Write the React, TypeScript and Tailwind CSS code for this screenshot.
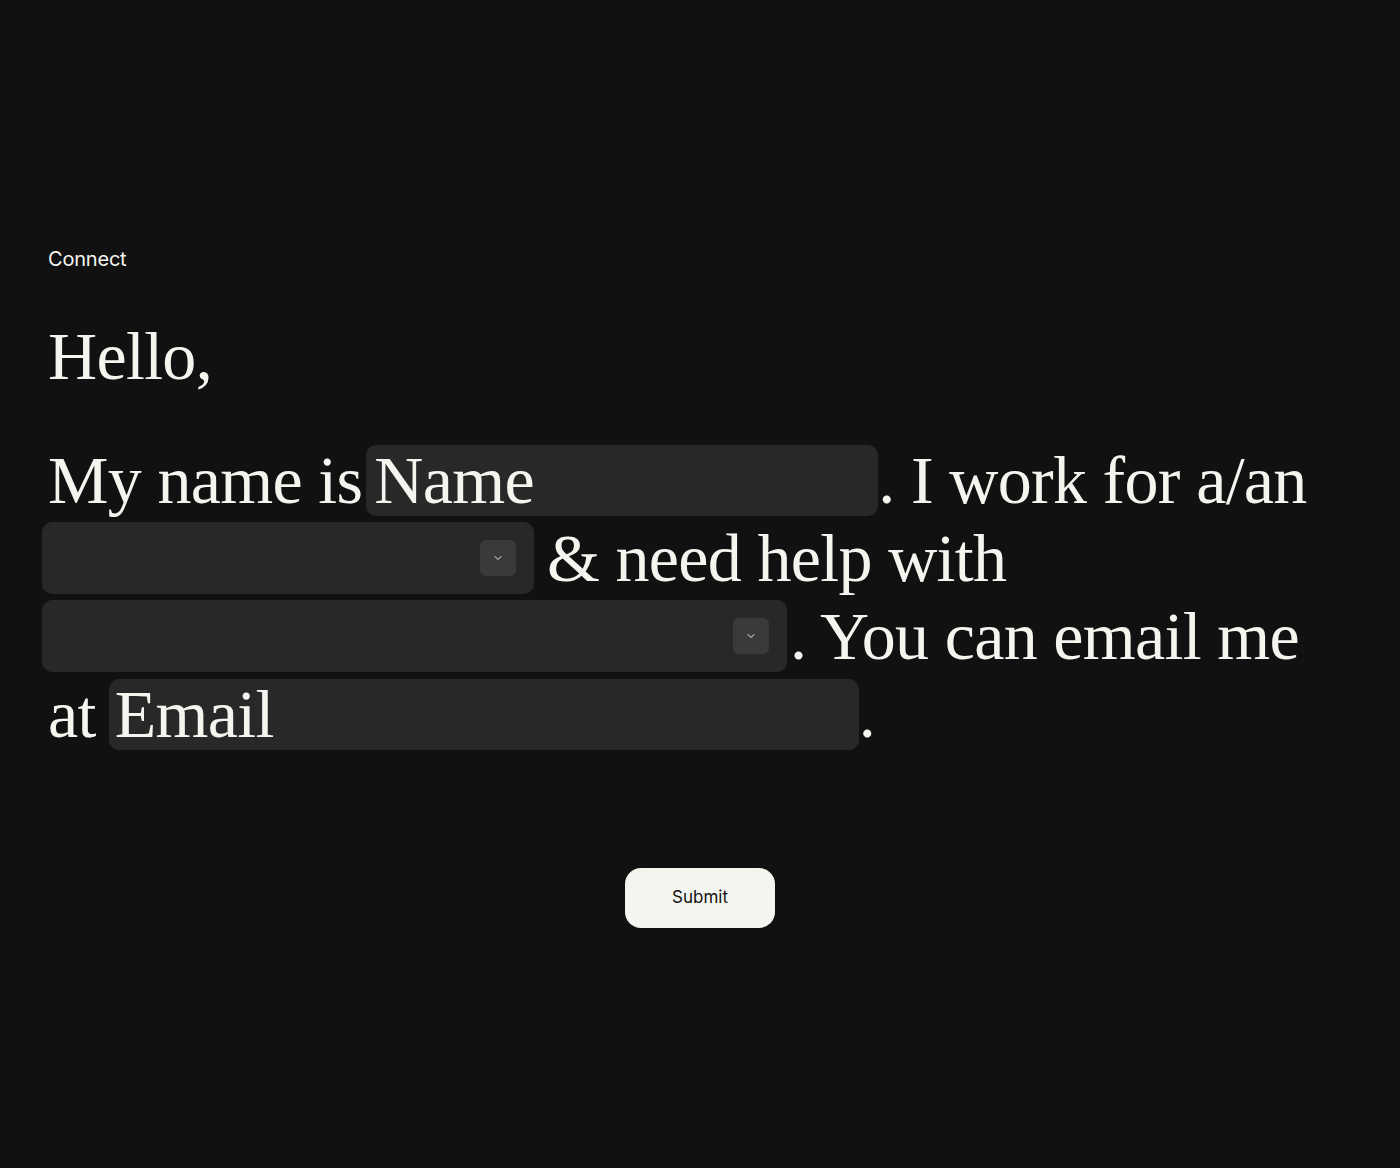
import { ChevronDown } from 'lucide-react'

const serif = "font-['Liberation_Serif',_'Times_New_Roman',_serif]"

function Select({ width }: { width: string }) {
  return (
    <div
      className={`${width} h-[72px] -ml-[6px] shrink-0 rounded-[10px] bg-[#282828] flex items-center justify-end pr-[18px]`}
    >
      <div className="h-9 w-9 rounded-md bg-[#3a3a3a] flex items-center justify-center">
        <ChevronDown className="h-3 w-3 text-[#f0f0ec]" strokeWidth={2} />
      </div>
    </div>
  )
}

export default function App() {
  return (
    <div className="min-h-[1168px] bg-[#111111] text-[#f5f5f0]">
      <div className="px-12 pt-[245px] pb-[240px]">
        {/* Label */}
        <p className="font-['Inter',_sans-serif] text-[20px] leading-7 tracking-[-0.01em]">Connect</p>

        {/* Form sentence */}
        <div className={`${serif} text-[68px] leading-[78px] tracking-[-0.01em] mt-[44px]`}>
          <p>Hello,</p>

          <div className="mt-[46px]">
            <div className="flex items-center h-[78px] whitespace-nowrap">
              <span>My name is</span>
              <input
                placeholder="Name"
                className={`${serif} ml-[4px] w-[512px] h-[71px] shrink-0 rounded-[10px] bg-[#282828] px-2 text-[68px] tracking-[-0.01em] text-[#f5f5f0] placeholder:text-[#f5f5f0] outline-none`}
              />
              <span>. I work for a/an</span>
            </div>
            <div className="flex items-center h-[78px] whitespace-nowrap">
              <Select width="w-[492px]" />
              <span className="ml-[13px]">&amp; need help with</span>
            </div>
            <div className="flex items-center h-[78px] whitespace-nowrap">
              <Select width="w-[745px]" />
              <span className="ml-[3px]">. You can email me</span>
            </div>
            <div className="flex items-center h-[78px] whitespace-nowrap">
              <span>at</span>
              <input
                placeholder="Email"
                className={`${serif} ml-[13px] w-[750px] h-[71px] shrink-0 rounded-[10px] bg-[#282828] px-[6px] text-[68px] tracking-[-0.01em] text-[#f5f5f0] placeholder:text-[#f5f5f0] outline-none`}
              />
              <span>.</span>
            </div>
          </div>
        </div>

        {/* Submit */}
        <div className="flex justify-center mt-[115px]">
          <button className="w-[150px] h-[60px] rounded-2xl bg-[#f5f5f0] text-[#111111] font-['Inter',_sans-serif] text-[17px]">
            Submit
          </button>
        </div>
      </div>
    </div>
  )
}
